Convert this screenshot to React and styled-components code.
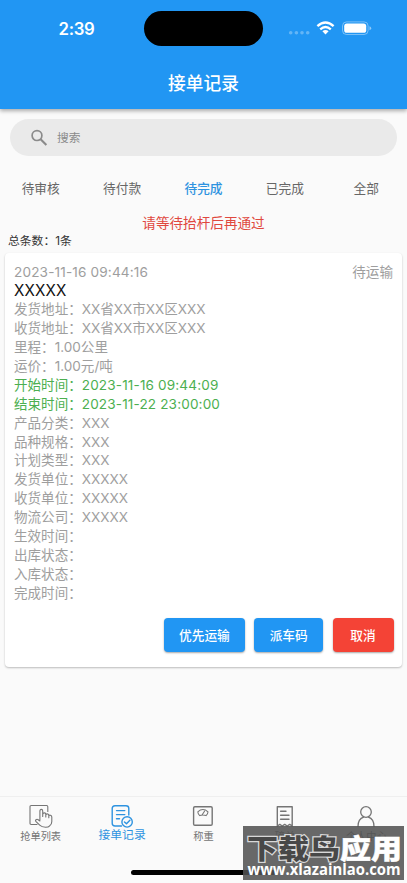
import React, { useState } from 'react';
import styled, { createGlobalStyle } from 'styled-components';

const GlobalStyle = createGlobalStyle`
  * {
    box-sizing: border-box;
  }
  body {
    margin: 0;
    background: #fafafa;
    font-family: Inter, "Noto Sans CJK SC", sans-serif;
  }
  button {
    font-family: inherit;
    border: none;
    padding: 0;
  }
`;

const Page = styled.div`
  position: relative;
  display: flex;
  flex-direction: column;
  width: 407px;
  height: 883px;
  overflow: hidden;
  background: #fafafa;
`;

const Header = styled.header`
  height: 109px;
  flex-shrink: 0;
  background: #2196f3;
  color: #fff;
  box-shadow: 0 2px 4px rgba(0, 0, 0, 0.32);
`;

const StatusBar = styled.div`
  display: grid;
  grid-template-columns: 144px 119px 1fr;
  align-items: center;
  height: 57px;
`;

const Clock = styled.div`
  padding-left: 58.5px;
  font-size: 16.8px;
  line-height: 20px;
  font-weight: 600;
  letter-spacing: -0.3px;
`;

const Island = styled.div`
  height: 35px;
  border-radius: 18px;
  background: #000;
`;

const StatusIcons = styled.div`
  display: flex;
  align-items: center;
  padding-left: 25px;
  height: 20px;
`;

const Title = styled.h1`
  margin: 0;
  height: 52px;
  line-height: 53px;
  text-align: center;
  font-size: 17.7px;
  font-weight: 500;
`;

const SearchBox = styled.label`
  display: flex;
  align-items: center;
  flex-shrink: 0;
  height: 37px;
  margin: 10px 10px 0;
  padding-left: 21px;
  border-radius: 19px;
  background: #eaeaea;
`;

const SearchInput = styled.input`
  flex: 1;
  margin-left: 9px;
  padding: 0;
  border: none;
  outline: none;
  background: transparent;
  font-family: inherit;
  font-size: 11.7px;
  color: #333;
  &::placeholder {
    color: #8b8b8b;
    opacity: 1;
  }
`;

const Tabs = styled.div`
  display: grid;
  grid-template-columns: repeat(5, 1fr);
  flex-shrink: 0;
  height: 40px;
  margin-top: 12px;
`;

const Tab = styled.button`
  background: transparent;
  font-size: 12.7px;
  line-height: 39px;
  font-weight: ${(props) => (props.$active ? 500 : 400)};
  color: ${(props) => (props.$active ? '#2e93e0' : '#666')};
`;

const Notice = styled.div`
  margin-top: 5px;
  line-height: 20px;
  text-align: center;
  font-size: 13.6px;
  color: #e0483e;
`;

const Total = styled.div`
  padding-left: 8px;
  line-height: 16px;
  font-size: 11.8px;
  color: #333;
`;

const Card = styled.section`
  height: 414px;
  flex-shrink: 0;
  margin: 4px 5px 0;
  padding: 9.5px 9px 0;
  border-radius: 4px;
  background: #fff;
  box-shadow: 0 1px 2px rgba(0, 0, 0, 0.25);
`;

const CardTop = styled.div`
  display: flex;
  justify-content: space-between;
  height: 18.9px;
  line-height: 18.9px;
  font-size: 13.6px;
  color: #9e9e9e;
`;

const DateText = styled.span`
  letter-spacing: ${(props) => props.$spacing || 0.15}px;
`;

const CardName = styled.div`
  height: 18.9px;
  line-height: 20.5px;
  font-size: 15.2px;
  letter-spacing: 0.15px;
  color: #111;
`;

const Row = styled.div`
  height: 18.9px;
  line-height: 18.9px;
  font-size: 13.55px;
  white-space: nowrap;
  color: ${(props) => (props.$green ? '#4caf50' : '#9e9e9e')};
`;

const Actions = styled.div`
  display: flex;
  justify-content: flex-end;
  gap: 9.3px;
  margin-top: 15px;
  margin-right: -0.5px;
`;

const ActionButton = styled.button`
  width: ${(props) => props.$width}px;
  height: 34px;
  border-radius: 4px;
  background: ${(props) => (props.$danger ? '#f44336' : '#2196f3')};
  color: #fff;
  font-size: 12.7px;
  font-weight: 500;
  box-shadow: 0 1px 2px rgba(0, 0, 0, 0.35);
`;

const BottomNav = styled.nav`
  display: grid;
  grid-template-columns: repeat(5, 1fr);
  height: 87px;
  margin-top: auto;
  flex-shrink: 0;
  border-top: 1px solid #efefef;
  background: #fafafa;
`;

const NavItem = styled.button`
  display: flex;
  flex-direction: column;
  align-items: center;
  padding-top: 7px;
  background: transparent;
  color: ${(props) => (props.$active ? '#2e93e0' : '#757575')};
  svg {
    display: block;
  }
`;

const NavLabel = styled.span`
  font-size: ${(props) => (props.$active ? 11.8 : 10.2)}px;
  line-height: 14px;
  margin-top: ${(props) => (props.$active ? 0 : 1)}px;
`;

const HomeIndicator = styled.div`
  position: absolute;
  left: 131px;
  bottom: 8px;
  width: 145px;
  height: 5px;
  border-radius: 3px;
  background: #000;
`;

const Watermark = styled.div`
  position: absolute;
  left: 243px;
  top: 826px;
  width: 161px;
  height: 54px;
  background: rgba(82, 82, 82, 0.87);
`;

const rows = [
  ['发货地址', 'XX省XX市XX区XXX'],
  ['收货地址', 'XX省XX市XX区XXX'],
  ['里程', '1.00公里'],
  ['运价', '1.00元/吨'],
  ['开始时间', '2023-11-16 09:44:09', true],
  ['结束时间', '2023-11-22 23:00:00', true],
  ['产品分类', 'XXX'],
  ['品种规格', 'XXX'],
  ['计划类型', 'XXX'],
  ['发货单位', 'XXXXX'],
  ['收货单位', 'XXXXX'],
  ['物流公司', 'XXXXX'],
  ['生效时间', ''],
  ['出库状态', ''],
  ['入库状态', ''],
  ['完成时间', ''],
];

const tabs = ['待审核', '待付款', '待完成', '已完成', '全部'];

const NavSvg = ({ children }) => (
  <svg width="24" height="24" viewBox="0 0 24 24" fill="none" stroke="currentColor" strokeWidth="1.1" strokeLinecap="round" strokeLinejoin="round">
    {children}
  </svg>
);

const GrabIcon = () => (
  <NavSvg>
    <path d="M8 20.5H2.2Q1 20.5 1 19.3V2.7Q1 1.5 2.2 1.5H17.6Q18.8 1.5 18.8 2.7V7.5" />
    <path d="M10.9 16V7Q10.9 5.4 12.3 5.4Q13.7 5.4 13.7 7V12.5M13.7 10.2Q14.2 8.8 15.4 8.9Q16.8 9 16.8 10.3V13M16.8 10.8Q17.3 9.7 18.4 9.9Q19.8 10.1 19.8 11.4V13.8M19.8 11.8Q20.4 10.9 21.4 11.2Q22.8 11.6 22.8 13V17.5Q22.8 20.3 20.7 21.8Q19.5 23.2 16.5 23.2Q12.7 23.2 10.7 21.2L6.8 17.4Q6.1 16.4 7 15.7Q8 14.9 9.2 15.7L10.9 17" />
  </NavSvg>
);

const RecordIcon = () => (
  <NavSvg>
    <g strokeWidth="1.4">
      <path d="M11.5 22H5Q2.2 22 2.2 19.3V4.5Q2.2 1.8 5 1.8H16Q18.8 1.8 18.8 4.5V11" />
      <path d="M6.5 6.6H14.8M6.5 10.6H14.8M6.5 14.8H9.5" />
      <circle cx="17.1" cy="17.9" r="5.2" />
      <path d="M14.5 17.9L16.5 19.8L19.9 16.3" />
    </g>
  </NavSvg>
);

const ScaleIcon = () => (
  <NavSvg>
    <rect x="2.6" y="2.7" width="18.6" height="18.6" rx="1.3" strokeWidth="1.4" />
    <path d="M6.8 7.8Q11.9 3.2 17 7.8Q16.8 10.2 15.1 11.6Q11.9 10.4 8.7 11.6Q7 10.2 6.8 7.8ZM11.2 10.7L13.5 7.2" />
  </NavSvg>
);

const BillIcon = () => (
  <NavSvg>
    <path d="M4.3 22V2.7H19.2V22L16.7 20.4L14.2 22L11.7 20.4L9.2 22L6.8 20.4Z" strokeWidth="1.4" />
    <path d="M7.6 7.2H13M7.6 11.2H16M7.6 15.2H16" strokeWidth="1.4" />
  </NavSvg>
);

const UserIcon = () => (
  <NavSvg>
    <circle cx="12" cy="8" r="5.3" strokeWidth="1.3" />
    <path d="M4 22.5Q4 15 9.6 13.2M14.4 13.2Q20 15 20 22.5" strokeWidth="1.3" />
  </NavSvg>
);

const navItems = [
  ['抢单列表', GrabIcon],
  ['接单记录', RecordIcon],
  ['称重', ScaleIcon],
  ['磅单', BillIcon],
  ['个人中心', UserIcon],
];

function App() {
  const [activeTab, setActiveTab] = useState('待完成');
  const [activeNav, setActiveNav] = useState('接单记录');
  const [keyword, setKeyword] = useState('');

  return (
    <Page>
      <GlobalStyle />
      <Header>
        <StatusBar>
          <Clock>2:39</Clock>
          <Island />
          <StatusIcons>
            <svg width="85" height="20" viewBox="0 0 85 20" fill="none">
              <g fill="#fff" opacity="0.3">
                <circle cx="2.7" cy="13.8" r="1.8" />
                <circle cx="8.4" cy="13.8" r="1.8" />
                <circle cx="14" cy="13.8" r="1.8" />
                <circle cx="19.7" cy="13.8" r="1.8" />
              </g>
              <g stroke="#fff" strokeWidth="2.4">
                <path d="M29.4 7.2Q37.5 0 45.6 7.2" />
                <path d="M32.2 10.3Q37.5 5.8 42.8 10.3" />
              </g>
              <path d="M34.4 12.3Q37.5 9.9 40.6 12.3L37.5 15.5Z" fill="#fff" />
              <rect x="54.5" y="2.9" width="25.6" height="12.6" rx="4" stroke="#fff" strokeOpacity="0.4" />
              <rect x="56.2" y="4.6" width="22" height="9.2" rx="2.6" fill="#fff" />
              <path d="M81.5 7.2Q83.2 7.8 83.2 9.2Q83.2 10.6 81.5 11.2Z" fill="#fff" opacity="0.5" />
            </svg>
          </StatusIcons>
        </StatusBar>
        <Title>接单记录</Title>
      </Header>

      <SearchBox>
        <svg width="17" height="17" viewBox="0 0 17 17" fill="none" stroke="#8b8b8b">
          <circle cx="6" cy="6.6" r="4.9" strokeWidth="1.7" />
          <path d="M9.6 10.2L15.4 16" strokeWidth="2.1" />
        </svg>
        <SearchInput placeholder="搜索" value={keyword} onChange={(e) => setKeyword(e.target.value)} />
      </SearchBox>

      <Tabs>
        {tabs.map((tab) => (
          <Tab key={tab} $active={tab === activeTab} onClick={() => setActiveTab(tab)}>{tab}</Tab>
        ))}
      </Tabs>

      <Notice>请等待抬杆后再通过</Notice>
      <Total>总条数：1条</Total>

      <Card>
        <CardTop>
          <DateText>2023-11-16 09:44:16</DateText>
          <span>待运输</span>
        </CardTop>
        <CardName>XXXXX</CardName>
        {rows.map(([label, value, green]) => (
          <Row key={label} $green={green}>
            {label}：{green ? <DateText>{value}</DateText> : value}
          </Row>
        ))}
        <Actions>
          <ActionButton $width={81}>优先运输</ActionButton>
          <ActionButton $width={69}>派车码</ActionButton>
          <ActionButton $width={61} $danger>取消</ActionButton>
        </Actions>
      </Card>

      <BottomNav>
        {navItems.map(([label, Icon]) => (
          <NavItem key={label} $active={label === activeNav} onClick={() => setActiveNav(label)}>
            <Icon />
            <NavLabel $active={label === activeNav}>{label}</NavLabel>
          </NavItem>
        ))}
      </BottomNav>

      <HomeIndicator />
      <Watermark>
        <svg width="161" height="54" viewBox="0 0 161 54" fontFamily='"Noto Sans CJK SC", sans-serif' fontWeight="900">
          <text x="4" y="32.5" fontSize="27.5" textLength="93" lengthAdjust="spacingAndGlyphs" fill="#484848" stroke="#d8d8d8" strokeWidth="2.4" paintOrder="stroke">下载鸟</text>
          <text x="97" y="32.5" fontSize="27.5" textLength="62" lengthAdjust="spacingAndGlyphs" fill="#fff" stroke="#fff" strokeWidth="0.5">应用</text>
          <text x="4.5" y="48.5" fontSize="15.5" fontFamily="Open Sans, sans-serif" fontWeight="700" textLength="153" lengthAdjust="spacingAndGlyphs" fill="#fff">www.xlazainlao.com</text>
        </svg>
      </Watermark>
    </Page>
  );
}

export default App;
